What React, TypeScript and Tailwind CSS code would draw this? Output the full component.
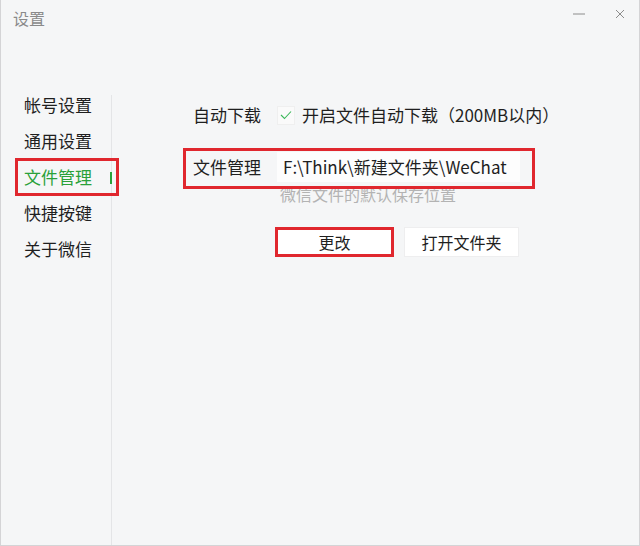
import React, { FC } from "react";

const font = { fontFamily: '"Noto Sans CJK SC", "Noto Sans", sans-serif' };

const menu = ["帐号设置", "通用设置", "文件管理", "快捷按键", "关于微信"];

const App: FC = () => {
  return (
    <div
      className="relative w-[640px] h-[546px] bg-[#f5f6f7] border-l border-r border-b border-[#d4d4d6] flex flex-col text-[#1f1f1f] overflow-hidden"
      style={font}
    >
      {/* title bar */}
      <div className="h-[95px] flex items-start justify-between">
        <div className="pl-[12px] pt-[7px] text-[16px] leading-[22px] text-[#8a8a8a]">设置</div>
        <div className="flex items-center pt-[9px] pr-[14px]">
          <svg width="12" height="10" viewBox="0 0 12 10" className="mr-[30px]">
            <line x1="0" y1="5" x2="12" y2="5" stroke="#8c8c8c" strokeWidth="1" />
          </svg>
          <svg width="10" height="10" viewBox="0 0 10 10">
            <path d="M1 1 L9 9 M9 1 L1 9" stroke="#8c8c8c" strokeWidth="1" fill="none" />
          </svg>
        </div>
      </div>

      <div className="flex flex-1">
        {/* sidebar */}
        <div className="w-[111px] border-r border-[#e4e5e7] flex flex-col gap-[16px] pl-[23px] pt-0">
          {menu.map((m) => (
            <div
              key={m}
              className={
                m === "文件管理"
                  ? "relative text-[17px] leading-[20px] text-[#2aa13a]"
                  : "text-[17px] leading-[20px] text-[#1f1f1f]"
              }
            >
              {m}
              {m === "文件管理" && (
                <span className="absolute left-[86px] top-[5px] w-[2px] h-[12px] bg-[#2aa13a]" />
              )}
            </div>
          ))}
        </div>

        {/* content */}
        <div className="flex-1 pl-[81px] pt-[8px] flex flex-col">
          <div className="flex items-center h-[24px]">
            <div className="w-[84px] text-[17px]">自动下载</div>
            <div className="w-[18px] h-[19px] bg-[#fafafa] border border-[#efefef] flex items-center justify-center mr-[7px]">
              <svg width="12" height="10" viewBox="0 0 12 10">
                <path d="M1 5 L4.5 8.5 L11 1.5" stroke="#3bb85a" strokeWidth="1.1" fill="none" />
              </svg>
            </div>
            <div className="text-[17px] whitespace-nowrap">开启文件自动下载（200MB以内）</div>
          </div>

          <div className="flex items-center mt-[25px]">
            <div className="w-[84px] text-[17px]">文件管理</div>
            <div className="w-[243px] h-[30px] bg-[#fdfdfd] flex items-center pl-[6px] text-[17px] whitespace-nowrap">
              F:\Think\新建文件夹\WeChat
            </div>
          </div>
          <div className="pl-[87px] mt-[1px] text-[16px] leading-[22px] text-[#b3b3b3]">微信文件的默认保存位置</div>

          <div className="flex mt-[22px] pl-[82px] gap-[10px]">
            <button className="w-[119px] h-[30px] bg-white text-[16px] border-[3px] border-[#e0272e]">更改</button>
            <button className="w-[115px] h-[30px] bg-white text-[16px] border border-[#eeeeef]">打开文件夹</button>
          </div>
        </div>
      </div>

      {/* red highlight frames */}
      <div className="absolute left-[14px] top-[158px] w-[104px] h-[38px] border-[3px] border-[#e0272e]" />
      <div className="absolute left-[182px] top-[148px] w-[352px] h-[41px] border-[3px] border-[#e0272e]" />
    </div>
  );
};

export default App;
